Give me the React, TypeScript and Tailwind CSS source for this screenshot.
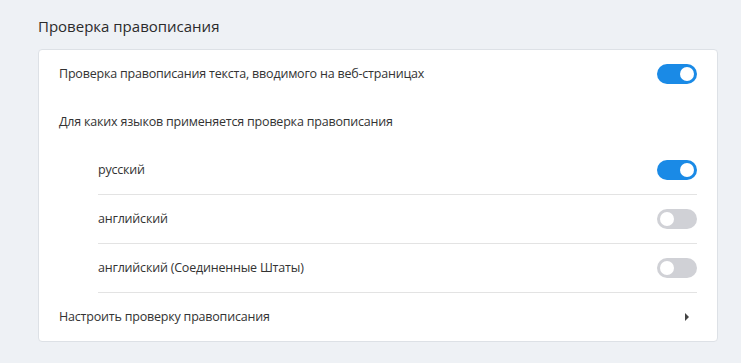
const languages = [
  { name: "русский", on: true },
  { name: "английский", on: false },
  { name: "английский (Соединенные Штаты)", on: false },
];

function Toggle({ on }: { on: boolean }) {
  return (
    <div
      className={`flex items-center w-[40px] h-[20px] rounded-full px-[3px] shrink-0 ${
        on ? "bg-[#1a8ae6] justify-end" : "bg-[#d0d1d6] justify-start"
      }`}
    >
      <div className="w-[14px] h-[14px] rounded-full bg-white" />
    </div>
  );
}

export default function App() {
  return (
    <div
      className="w-[741px] h-[363px] bg-[#eef1f5] pt-[15px] pl-[38px] pr-[23px] text-[#333]"
      style={{ fontFamily: '"Open Sans", "Noto Sans", sans-serif' }}
    >
      {/* Section title */}
      <h2 className="text-[15px] leading-[22px] font-normal text-[#2b2b2b] mb-[12px]">Проверка правописания</h2>

      {/* Card */}
      <div className="bg-white border border-[#dde1e6] rounded-[4px] px-[20px] text-[12.5px] tracking-[-0.2px]">
        <div className="flex items-center justify-between h-[48px]">
          <span>Проверка правописания текста, вводимого на веб-страницах</span>
          <Toggle on />
        </div>
        <div className="flex items-center h-[48px]">
          <span>Для каких языков применяется проверка правописания</span>
        </div>
        <div className="pl-[39px]">
          {languages.map((l) => (
            <div key={l.name} className="flex items-center justify-between h-[49px] border-b border-[#e3e3e3]">
              <span>{l.name}</span>
              <Toggle on={l.on} />
            </div>
          ))}
        </div>
        <div className="flex items-center justify-between h-[48px]">
          <span>Настроить проверку правописания</span>
          <svg width="12" height="12" viewBox="0 0 12 12" className="mr-[4px]">
            <path d="M4 2 L8 6 L4 10 Z" fill="#444" />
          </svg>
        </div>
      </div>
    </div>
  );
}
